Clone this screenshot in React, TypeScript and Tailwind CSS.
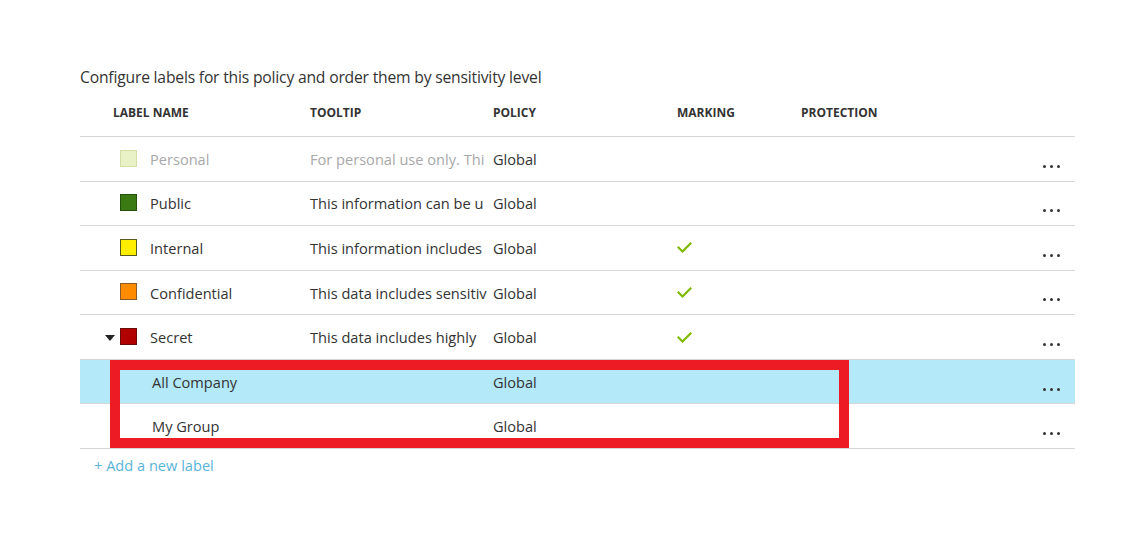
import React from "react";

type Row = {
  name: string;
  color?: string;
  border?: string;
  tooltip?: string;
  marking?: boolean;
  muted?: boolean;
  expand?: boolean;
  sub?: boolean;
  selected?: boolean;
};

const rows: Row[] = [
  { name: "Personal", color: "#e9f2c6", border: "#d2dea6", tooltip: "For personal use only. Thi", muted: true },
  { name: "Public", color: "#3b7a12", border: "#24520a", tooltip: "This information can be u" },
  { name: "Internal", color: "#ffee00", border: "#5a5a20", tooltip: "This information includes", marking: true },
  { name: "Confidential", color: "#ff8c00", border: "#8a5a2a", tooltip: "This data includes sensitiv", marking: true },
  { name: "Secret", color: "#b10000", border: "#6a0a0a", tooltip: "This data includes highly", marking: true, expand: true },
  { name: "All Company", sub: true, selected: true },
  { name: "My Group", sub: true },
];

function Check() {
  return (
    <svg width="15" height="11" viewBox="0 0 15 11" fill="none">
      <polyline points="1.5,5.5 5.5,9.5 13.5,1.5" stroke="#7fba00" strokeWidth="2.2" strokeLinecap="square" />
    </svg>
  );
}

function Dots() {
  return (
    <div className="flex gap-[4px] mt-[13px]">
      <span className="w-[3px] h-[3px] rounded-full bg-[#333]" />
      <span className="w-[3px] h-[3px] rounded-full bg-[#333]" />
      <span className="w-[3px] h-[3px] rounded-full bg-[#333]" />
    </div>
  );
}

export default function App() {
  return (
    <div
      className="w-[1140px] h-[560px] bg-white text-[#333] overflow-hidden"
      style={{ fontFamily: '"Open Sans", "Noto Sans", "Liberation Sans", sans-serif' }}
    >
      <div className="pt-[66px] pl-[80px] w-[1075px]">
        <div className="text-[15.7px] leading-[22px] text-[#333] tracking-[-0.2px]">
          Configure labels for this policy and order them by sensitivity level
        </div>
        <div className="relative">
          <div className="flex items-center h-[49px] pt-[1px] border-b border-[#d6d6d6] text-[12px] font-bold text-[#333]">
            <div className="w-[230px] pl-[33px]">LABEL NAME</div>
            <div className="w-[183px]">TOOLTIP</div>
            <div className="w-[184px]">POLICY</div>
            <div className="w-[124px]">MARKING</div>
            <div className="flex-1">PROTECTION</div>
          </div>
          {rows.map((r, i) => (
            <div
              key={i}
              className={`flex items-center h-[44.57px] pt-[2px] border-b border-[#d6d6d6] text-[14.6px] ${r.selected ? "bg-[#b3e9f8]" : ""}`}
            >
              <div className={`w-[230px] flex items-center ${r.sub ? "pl-[72px]" : "pl-[25px]"}`}>
                {!r.sub && (
                  <>
                    <div className="w-[15px] flex justify-start">
                      {r.expand && (
                        <div className="w-0 h-0 border-l-[5.5px] border-r-[5.5px] border-t-[6px] border-l-transparent border-r-transparent border-t-[#222]" />
                      )}
                    </div>
                    <div
                      className="w-[17px] h-[17px] border -mt-[3px]"
                      style={{ backgroundColor: r.color, borderColor: r.border }}
                    />
                    <div className={`ml-[13px] ${r.muted ? "text-[#a8a8a8]" : ""}`}>{r.name}</div>
                  </>
                )}
                {r.sub && <div>{r.name}</div>}
              </div>
              <div className={`w-[183px] whitespace-nowrap ${r.muted ? "text-[#a8a8a8]" : ""}`}>
                {r.tooltip ?? ""}
              </div>
              <div className="w-[184px]">Global</div>
              <div className="w-[124px] flex items-center -mt-[2px]">{r.marking && <Check />}</div>
              <div className="flex-1 flex justify-end pr-[15px]">
                <Dots />
              </div>
            </div>
          ))}
          <div className="absolute left-[30px] top-[272px] w-[739px] h-[88px] border-[10px] border-[#ed1c24] pointer-events-none" />
          <div className="pl-[14px] pt-[6px] text-[14.6px] text-[#59b4d9]">+ Add a new label</div>
        </div>
      </div>
    </div>
  );
}
